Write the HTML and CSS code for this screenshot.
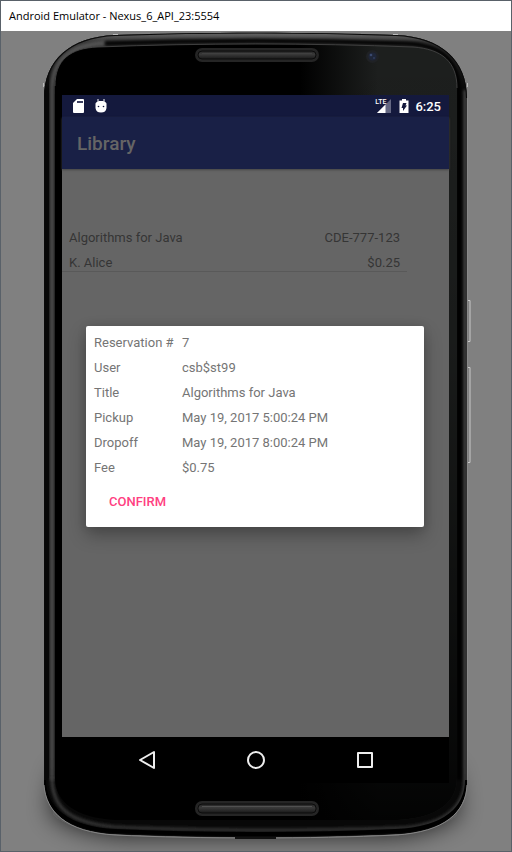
FILE: index.html
```html
<!DOCTYPE html>
<html lang="en">
<head>
<meta charset="utf-8">
<meta name="viewport" content="width=device-width, initial-scale=1">
<title>Android Emulator - Nexus_6_API_23:5554</title>
<link rel="stylesheet" href="styles.css">
</head>
<body>
<div class="window">
  <header class="titlebar">Android Emulator - Nexus_6_API_23:5554</header>
  <main class="stage">
    <svg class="device" viewBox="1 31 510 820" preserveAspectRatio="none" aria-hidden="true">
      <defs>
        <linearGradient id="rim" x1="0" x2="0" y1="32" y2="838" gradientUnits="userSpaceOnUse">
          <stop offset="0" stop-color="#555"/><stop offset=".08" stop-color="#484848"/>
          <stop offset=".9" stop-color="#484848"/><stop offset="1" stop-color="#333"/>
        </linearGradient>
        <linearGradient id="top" x1="0" x2="0" y1="33" y2="90" gradientUnits="userSpaceOnUse">
          <stop offset="0" stop-color="#666"/><stop offset=".16" stop-color="#333"/>
          <stop offset="1" stop-color="#222" stop-opacity="0"/>
        </linearGradient>
        <linearGradient id="glass" x1="300" x2="456" y1="0" y2="0" gradientUnits="userSpaceOnUse">
          <stop offset="0" stop-color="#1d1f1e" stop-opacity="0"/><stop offset=".5" stop-color="#1d1f1e"/><stop offset="1" stop-color="#1d1f1e"/>
        </linearGradient>
        <linearGradient id="fade" x1="0" x2="0" y1="44" y2="820" gradientUnits="userSpaceOnUse">
          <stop offset="0" stop-color="#000" stop-opacity="0"/><stop offset=".4" stop-color="#000" stop-opacity=".15"/>
          <stop offset=".92" stop-color="#000" stop-opacity=".75"/><stop offset="1" stop-color="#000" stop-opacity=".9"/>
        </linearGradient>
        <linearGradient id="slot" x1="0" x2="0" y1="0" y2="1">
          <stop offset="0" stop-color="#222"/><stop offset=".4" stop-color="#3a3a3a"/><stop offset="1" stop-color="#191919"/>
        </linearGradient>
        <filter id="soft" x="-30%" y="-30%" width="160%" height="160%"><feGaussianBlur stdDeviation="12"/></filter>
        <filter id="slight" x="-5%" y="-5%" width="110%" height="110%"><feGaussianBlur stdDeviation="1.500"/></filter>
        <clipPath id="shape"><path d="M44 98C44 60 70 37 115 35C200 32 312 32 396 35C441 37 467 60 467 98V780C467 810 447 832 396 834C312 838 200 838 115 834C66 832 44 810 44 780Z"/></clipPath>
        <clipPath id="face"><path d="M55 86C55 60 70 48 98 47C200 43 312 43 413 47C442 49 457 62 457 88V778C457 802 438 818 398 820H116C76 818 55 802 55 778Z"/></clipPath>
      </defs>
      <path d="M58 770H453L459 815Q430 834 390 836H121Q65 830 50 812Z" fill="#111" opacity=".75" filter="url(#soft)"/>
      <path d="M468 300.500h2v41h-2M468 367.500h2v95h-2" fill="none" stroke="#c8c8c8"/>
      <g clip-path="url(#shape)">
        <path d="M40 30H472V842H40Z" fill="#080808"/>
        <path d="M40 30H472V90H40Z" fill="url(#top)"/>
        <path d="M52 780V90C52 62 68 45 105 43" fill="none" stroke="url(#rim)" stroke-width="5" filter="url(#slight)"/>
        <path d="M465 90V780C465 808 442 827 396 828C312 831 200 831 115 827C70 823 52 808 52 778" fill="none" stroke="url(#rim)" stroke-width="3" filter="url(#slight)"/>
        <path d="M105 43.500C200 40 312 40 406 43.500C446 45 459 64 459 94V780" fill="none" stroke="#050505" stroke-width="4" filter="url(#slight)"/>
        <path d="M44 98C44 60 70 37 115 35C200 32 312 32 396 35C441 37 467 60 467 98V780C467 810 447 832 396 834C312 838 200 838 115 834C66 832 44 810 44 780Z" fill="none" stroke="#0a0a0a" stroke-width="2"/>
        <path d="M44 780C44 807 66 829 115 831C200 835 312 835 396 831C447 829 467 807 467 780" fill="none" stroke="#000" stroke-width="4"/>
      </g>
      <g clip-path="url(#face)">
        <path d="M50 40H462V825H50Z" fill="#000"/>
        <path d="M300 40H462V825H300Z" fill="url(#glass)"/>
        <path d="M300 40H462V825H300Z" fill="url(#fade)"/>
      </g>
      <path d="M55 86C55 60 70 48 98 47C200 43 312 43 413 47C442 49 457 62 457 88" fill="none" stroke="#4a4a4a" stroke-width=".8"/>
      <path d="M44 785C46 812 66 832 115 835C200 839 312 839 396 835C445 832 466 812 467 785" fill="none" stroke="#858585"/>
      <path d="M467 98V780" fill="none" stroke="#aaa" stroke-width=".5"/>
      <path d="M113 34.500h5M393 34.500h5M43.500 83v4M467.500 83v4" stroke="#bbb"/>
      <path d="M235 838h41" stroke="#111" stroke-width="2"/>
      <rect x="195" y="48" width="124" height="14" rx="7" fill="#252525"/>
      <rect x="198" y="51" width="118" height="8" rx="4" fill="url(#slot)" stroke="#0c0c0c"/>
      <path d="M202 53.500H312" stroke="#404040"/>
      <rect x="195" y="801" width="124" height="15" rx="7" fill="#252525"/>
      <rect x="198" y="804" width="118" height="9" rx="4" fill="url(#slot)" stroke="#0c0c0c"/>
      <path d="M202 806.500H312" stroke="#505050"/>
      <circle cx="372.500" cy="56.500" r="6.500" fill="#202225"/>
      <circle cx="372.500" cy="56.500" r="4" fill="#1f2638"/>
      <circle cx="371" cy="55" r="1.300" fill="#3a496e"/>
      <circle cx="374" cy="58" r="1" fill="#303c5c"/>
    </svg>
    <div class="phone">
      <section class="screen">
        <div class="status">
          <svg width="13" height="14" viewBox="0 0 13 14" aria-label="SD card"><path d="M5 0H11Q12 0 12 1V13Q12 14 11 14H2Q1 14 1 13V4Z" fill="#fff"/><path d="M5 3H11" stroke="#3b3f60" stroke-width="2"/></svg>
          <svg class="debug" width="12" height="14" viewBox="0 0 12 14" aria-label="Debugging"><path d="M3 0V3M9 0V3" stroke="#fff"/><path d="M.5 4.500Q1 3 2 3L4 2H8L10 3Q11 3 11.500 4.500V9Q11 13.500 6 13.500Q1 13.500 .5 9Z" fill="#fff"/><circle cx="3.500" cy="7.500" r=".8" fill="#14193d"/><circle cx="8.500" cy="7.500" r=".8" fill="#14193d"/></svg>
          <span class="network"><span class="lte">LTE</span><svg width="14" height="14" viewBox="0 0 14 14" aria-label="Signal"><path d="M14 0V14H0Z" fill="#646782"/><path d="M8.500 5.500V14H0Z" fill="#fff"/></svg></span>
          <svg class="battery" width="10" height="14" viewBox="0 0 10 14" aria-label="Battery charging"><path d="M3 0H7V1.500H9.500V14H.5V1.500H3Z" fill="#fff"/><path d="M4 4H7.500L6.500 6.500H8L4 12V9H2.500Z" fill="#14193d"/></svg>
          <time>6:25</time>
        </div>
        <header class="appbar"><h1>Library</h1></header>
        <div class="content">
          <div class="book">
            <div class="line"><span>Algorithms for Java</span><span>CDE-777-123</span></div>
            <div class="line"><span>K. Alice</span><span>$0.25</span></div>
          </div>
        </div>
        <div class="dialog" role="dialog" aria-label="Reservation">
          <table>
            <tr><th scope="row">Reservation #</th><td>7</td></tr>
            <tr><th scope="row">User</th><td>csb$st99</td></tr>
            <tr><th scope="row">Title</th><td>Algorithms for Java</td></tr>
            <tr><th scope="row">Pickup</th><td>May 19, 2017 5:00:24 PM</td></tr>
            <tr><th scope="row">Dropoff</th><td>May 19, 2017 8:00:24 PM</td></tr>
            <tr><th scope="row">Fee</th><td>$0.75</td></tr>
          </table>
          <button class="confirm" type="button">CONFIRM</button>
        </div>
      </section>
      <nav class="nav">
        <button type="button" aria-label="Back"><svg width="18" height="20" viewBox="0 0 18 20"><path d="M16 2V18L2 10Z"/></svg></button>
        <button type="button" aria-label="Home"><svg width="18" height="20" viewBox="0 0 18 20"><circle cx="9" cy="10" r="8"/></svg></button>
        <button type="button" aria-label="Overview"><svg width="18" height="20" viewBox="0 0 18 20"><path d="M2 3H16V17H2Z"/></svg></button>
      </nav>
    </div>
  </main>
</div>
</body>
</html>
```
FILE: styles.css
```css
* { box-sizing: border-box; }
body { margin: 0; font-family: Roboto, sans-serif; font-size: 13px; }
.window {
  min-height: 100vh;
  display: flex;
  flex-direction: column;
  border: 1px solid #596169;
  background: #808080;
}
.titlebar {
  height: 30px;
  padding: 0 8px;
  background: #fff;
  color: #000;
  font: 11px/30px "Open Sans", sans-serif;
}
.stage {
  flex: 1;
  position: relative;
  display: flex;
  padding: 64px 62px 68px 61px;
}
.device { position: absolute; inset: 0; width: 100%; height: 100%; }
.phone { flex: 1; position: relative; display: flex; flex-direction: column; }
.screen {
  flex: 1;
  position: relative;
  display: flex;
  flex-direction: column;
  background: #656565;
}
.status {
  height: 22px;
  display: flex;
  align-items: center;
  padding: 0 8px 0 10px;
  background: #14193d;
  color: #fff;
}
.debug { margin-left: 10px; }
.network { display: flex; margin-left: auto; }
.lte { font-size: 7px; line-height: 7px; font-weight: 500; margin-right: -9px; z-index: 1; }
.battery { margin: 0 6px 0 8px; }
.status time { font-size: 13px; font-weight: 500; }
.appbar {
  height: 52px;
  padding: 0 15px;
  background: #192046;
  color: #656565;
  box-shadow: 0 1px 2px #444;
}
.appbar h1 { margin: 0; font-size: 19px; line-height: 54px; font-weight: 500; }
.content { padding: 56px 42px 0 0; }
.book { padding: 0 7px; border-bottom: 1px solid #595959; color: #353535; }
.line { display: flex; justify-content: space-between; height: 25px; line-height: 25px; }
.line:last-child { height: 21px; }
.dialog {
  position: absolute;
  top: 231px;
  left: 24px;
  right: 25px;
  padding: 4px 8px 7px;
  border-radius: 2px;
  background: #fff;
  color: #757575;
  box-shadow: 0 8px 18px rgba(0, 0, 0, .3), 0 0 10px rgba(0, 0, 0, .1);
}
.dialog table { border-collapse: collapse; }
.dialog th, .dialog td { height: 25px; padding: 0; line-height: 25px; text-align: left; font-weight: 400; }
.dialog th { width: 88px; }
.confirm {
  display: block;
  height: 38px;
  margin-top: 2px;
  padding: 0 15px;
  border: 0;
  background: none;
  color: #ff4081;
  font: 500 13px Roboto, sans-serif;
}
.nav {
  height: 46px;
  display: flex;
  justify-content: space-around;
  padding: 0 30px;
  background: #000;
}
.nav button { display: flex; align-items: center; padding: 0; border: 0; background: none; }
.nav svg { fill: none; stroke: #eee; stroke-width: 2; stroke-linejoin: round; }
```
